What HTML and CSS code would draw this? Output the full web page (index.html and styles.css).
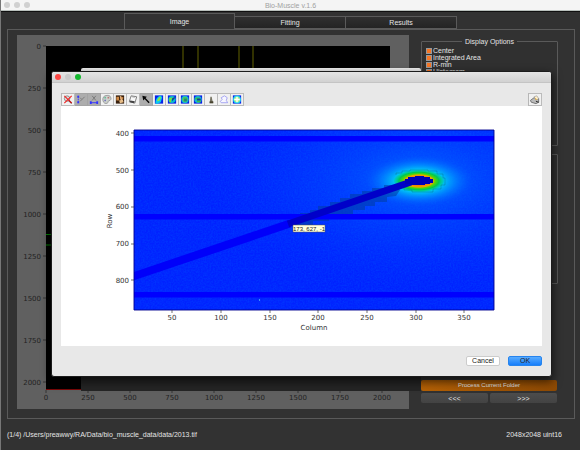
FILE: index.html
```html
<!DOCTYPE html>
<html lang="en">
<head>
<meta charset="utf-8">
<title>Bio-Muscle v.1.6</title>
<link rel="stylesheet" href="styles.css">
</head>
<body>
<div class="window">
  <header class="titlebar">
    <div class="lights"><i></i><i></i><i></i></div>
    <span>Bio-Muscle v.1.6</span>
  </header>
  <nav class="tabs">
    <button class="tab active">Image</button>
    <button class="tab">Fitting</button>
    <button class="tab">Results</button>
  </nav>
  <main class="panel">
    <svg class="figure" viewBox="17 35 392 374" preserveAspectRatio="none">
      <path d="M46 46H390V390H46Z"/>
      <path d="M183 46V390M198 46V390M239 46V390M253 46V390" stroke="#4c4c00" stroke-width="1.300"/>
      <path d="M46 234.500H390M46 245H390" stroke="#008500"/>
      <path d="M46 389.500H390" stroke="#790808"/>
      <path d="M43 46h3M43 88h3M43 130h3M43 172h3M43 214h3M43 256h3M43 298h3M43 340h3M43 382h3M46 390v3M88 390v3M130 390v3M172 390v3M214 390v3M256 390v3M298 390v3M340 390v3M382 390v3" stroke="#222" stroke-width=".7"/>
      <g class="ticks end">
        <text x="41" y="49">0</text><text x="41" y="91">250</text><text x="41" y="133">500</text><text x="41" y="175">750</text><text x="41" y="217">1000</text><text x="41" y="259">1250</text><text x="41" y="301">1500</text><text x="41" y="343">1750</text><text x="41" y="385">2000</text>
      </g>
      <g class="ticks middle">
        <text x="46" y="400">0</text><text x="88" y="400">250</text><text x="130" y="400">500</text><text x="172" y="400">750</text><text x="214" y="400">1000</text><text x="256" y="400">1250</text><text x="298" y="400">1500</text><text x="340" y="400">1750</text><text x="382" y="400">2000</text>
      </g>
    </svg>
    <aside class="side">
      <fieldset class="group options">
        <legend>Display Options</legend>
        <label><input type="checkbox" checked>Center</label>
        <label><input type="checkbox" checked>Integrated Area</label>
        <label><input type="checkbox" checked>R-min</label>
        <label><input type="checkbox" checked>Histogram</label>
      </fieldset>
      <div class="group settings"></div>
      <div class="actions">
        <button class="process">Process Current Folder</button>
        <button>&lt;&lt;&lt;</button>
        <button>&gt;&gt;&gt;</button>
      </div>
    </aside>
  </main>
  <footer class="status">
    <span>(1/4) /Users/preawwy/RA/Data/bio_muscle_data/data/2013.tif</span>
    <span>2048x2048 uint16</span>
  </footer>
</div>

<div class="back-dialog"></div>

<section class="dialog" role="dialog">
  <div class="dialog-bar lights colored"><i></i><i></i><i></i></div>
  <div class="dialog-body">
    <div class="toolbar">
      <div class="tools">
        <button><svg viewBox="0 0 12 12"><circle cx="5" cy="5" r="3" fill="#ddd" stroke="#888"/><path d="M7 7l3 3" stroke="#222" stroke-width="1.500"/><path d="M2 2l8 8M10 2l-8 8" stroke="#f32222" stroke-width="1.200"/></svg></button>
        <button class="on"><svg viewBox="0 0 12 12"><path d="M3 2v8" stroke="#33f" stroke-dasharray="2 1"/><path d="M2 2h2v2H2zM2 8h2v2H2z" fill="#33f"/><path d="M5 4l2 2 3-3M7 6L5 8" fill="none" stroke="#777"/></svg></button>
        <button class="on"><svg viewBox="0 0 12 12"><path d="M2 9.500h8" stroke="#33f"/><path d="M1.500 8h2v3h-2zM8.500 8h2v3h-2z" fill="#33f"/><path d="M4 2l4 5M8 2L4 7" stroke="#777"/></svg></button>
        <button><svg viewBox="0 0 12 12"><path d="M6 1.500C2.500 1.500 1 4 1.500 7s3 4 5 3c1-1 0-2 1.500-2.500 2-.5 3-2 2-4S8 1.500 6 1.500z" fill="#ccd2cc" stroke="#888" stroke-width=".8"/><circle cx="4" cy="4" r="1" fill="#6b9"/><circle cx="7.500" cy="4" r="1" fill="#b77"/><circle cx="4" cy="7" r="1" fill="#77b"/></svg></button>
        <button><svg viewBox="0 0 12 12"><path d="M1.500 1.500h9v9h-9z" fill="#38200f"/><path d="M2 3h3v4H2zM6 2l4 2-2 3-2-1z" fill="#cf8a46"/><path d="M5 7l4-1 1 3-4 1z" fill="#e8bd87"/><path d="M6 2l2 5" stroke="#eee" stroke-width=".5"/></svg></button>
        <button><svg viewBox="0 0 12 12"><path d="M4 2l6 1-2 7-6-2z" fill="#f8f8f8" stroke="#555" stroke-width=".8"/><path d="M3 7l5 1-1 2-5-1z" fill="#444"/><path d="M5 3l3 .5" stroke="#999"/></svg></button>
        <button class="on"><svg viewBox="0 0 12 12"><path d="M2 2l5 1-1.500 1.300L10 9 8.800 10 4.500 5.500 3 7z" fill="#080808"/></svg></button>
        <button><svg viewBox="0 0 12 12"><path d="M1.500 1.500h9v9h-9z" fill="#0820e8"/><path d="M2 10C2 5 5 2 8 1.500l1.500 2L8 9l-4 2z" fill="#09c9ee"/><path d="M4 8c0-3 2-5 4-5 0 3-1 5-4 5z" fill="#8ae64c"/></svg></button>
        <button><svg viewBox="0 0 12 12"><path d="M1.500 1.500h9v9h-9z" fill="#0820e8"/><ellipse cx="6" cy="6" rx="4" ry="3.800" fill="#08bcd1"/><path d="M3 4h5v2H5v3H3z" fill="#79df39"/><path d="M6 5l3-2v2L6 8z" fill="#123b9c"/></svg></button>
        <button><svg viewBox="0 0 12 12"><path d="M1.500 1.500h9v9h-9z" fill="#0820e8"/><circle cx="6" cy="6" r="4" fill="#12b9d0"/><circle cx="6" cy="6" r="2.700" fill="#52ca48"/><path d="M5 5h3v3H5z" fill="#257f80"/></svg></button>
        <button><svg viewBox="0 0 12 12"><path d="M1.500 1.500h9v9h-9z" fill="#0820e8"/><ellipse cx="6" cy="6" rx="4" ry="3.800" fill="#12b9d0"/><path d="M3 4h5v2H3zM5 7h4v2H5z" fill="#40bd48"/><path d="M5 5h4v2H5z" fill="#153d92"/></svg></button>
        <button><svg viewBox="0 0 12 12"><path d="M5.300 3h1.500l.5 3L8.500 10h-4L5 6z" fill="#777564"/><path d="M4.500 8h4v2h-4z" fill="#47432f"/></svg></button>
        <button><svg viewBox="0 0 12 12"><path d="M3 9.500h7L8.500 7l1-3-3-2L3 4l1 2-2 2z" fill="#f6f6ff" stroke="#8c8cf0" stroke-width=".8"/></svg></button>
        <button><svg viewBox="0 0 12 12"><path d="M1.500 1.500h9v9h-9z" fill="#0820e8"/><circle cx="6" cy="6" r="4.300" fill="#22d6ee"/><circle cx="6" cy="6" r="3" fill="#b9f17d"/><path d="M6 3v6M3 6h6" stroke="#fff" stroke-width="1.500"/></svg></button>
      </div>
      <div class="tools">
        <button><svg viewBox="0 0 12 12"><path d="M1 7l4-3 5 1v4l-3 1.500L2 9z" fill="#bbb" stroke="#555" stroke-width=".8"/><path d="M5 3l3-1 2 3-3 2z" fill="#fff1d0" stroke="#888" stroke-width=".6"/><path d="M6 5l2 1" stroke="#e2a41c"/><path d="M7 8l3 1" stroke="#222"/></svg></button>
      </div>
    </div>
    <svg class="plot" viewBox="61 106 481 240">
      <defs>
        <radialGradient id="wide"><stop offset="0" stop-color="#0068ff"/><stop offset=".35" stop-color="#004cff" stop-opacity=".65"/><stop offset="1" stop-color="#0030ff" stop-opacity="0"/></radialGradient>
        <radialGradient id="cyan"><stop offset="0" stop-color="#00ffe0"/><stop offset=".4" stop-color="#00e4ee" stop-opacity=".9"/><stop offset=".65" stop-color="#00a8ff" stop-opacity=".55"/><stop offset="1" stop-color="#0060ff" stop-opacity="0"/></radialGradient>
        <radialGradient id="hot"><stop offset="0" stop-color="#f24400"/><stop offset=".56" stop-color="#f0a000"/><stop offset=".64" stop-color="#58d800"/><stop offset=".8" stop-color="#00c850"/><stop offset="1" stop-color="#00c8a0" stop-opacity=".4"/></radialGradient>
        <filter id="grain" x="0" y="0" width="1" height="1"><feTurbulence type="fractalNoise" baseFrequency=".6" numOctaves="2" seed="4"/><feColorMatrix values="0 0 0 0 0  0 0 0 0 .18  0 0 0 0 1  1 0 0 0 -.3"/></filter>
        <clipPath id="area"><path d="M134 130H494V310H134Z"/></clipPath>
      </defs>
      <g clip-path="url(#area)">
        <path d="M134 130H494V310H134Z" fill="#0022ff"/>
        <ellipse cx="418" cy="180" rx="210" ry="110" fill="url(#wide)"/>
        <path d="M134 130H494V310H134Z" filter="url(#grain)" opacity=".4"/>
        <ellipse cx="419" cy="181" rx="54" ry="25" fill="url(#cyan)"/>
        <ellipse cx="419" cy="181" rx="25" ry="11" fill="url(#hot)"/>
        <path d="M290 220l10-3v-4h10v-3h8v-4h12v-4h10v-4h10v-4h12v-3h10v-3h12v-3h12l4 5-4 6-9 1v5h-12v4h-10v4h-12v4h-12v3h-12v4h-16v4h-20l-13 2z" fill="#003ca0" opacity=".55"/>
        <path d="M396 175v-2h6v-2h8v-1h18v1h9v3h6v4h2v7h-4v4h-8v3h-21v-2h-8v-3" fill="none" stroke="#006b78" stroke-width=".7" opacity=".5"/>
        <path d="M134 136H494v5.500H134ZM134 214H494v5.500H134ZM134 292H494v5.500H134Z" fill="#00f"/>
        <path d="M130 277.500L290 223.500" stroke="#0000fa" stroke-width="8"/>
        <path d="M288 224L411 182" stroke="#0000c9" stroke-width="7"/>
        <path d="M405 181v-2h3v-2h7v-1h9v1h6v2h3v4h-3v1h-5v1h-15v-1h-5z" fill="#0000b8"/>
        <path d="M259 299.500h1v1h-1z" fill="#7ff"/>
      </g>
      <path d="M134 130H494V310H134Z" fill="none" stroke="#000090" stroke-width=".9"/>
      <path d="M131 133h3M131 170h3M131 207h3M131 244h3M131 280h3M172 310v3M221 310v3M270 310v3M318 310v3M367 310v3M416 310v3M464 310v3" stroke="#333" stroke-width=".7"/>
      <g class="ticks end"><text x="129" y="136">400</text><text x="129" y="173">500</text><text x="129" y="209">600</text><text x="129" y="246">700</text><text x="129" y="283">800</text></g>
      <g class="ticks middle"><text x="172" y="320">50</text><text x="221" y="320">100</text><text x="270" y="320">150</text><text x="318" y="320">200</text><text x="367" y="320">250</text><text x="416" y="320">300</text><text x="464" y="320">350</text><text x="314" y="330">Column</text><text transform="translate(112 221) rotate(-90)">Row</text></g>
      <path d="M293 225h32v7h-32z" fill="#ffffdc" stroke="#555" stroke-width=".5"/>
      <text class="readout" x="309" y="231">173, 627, -1</text>
    </svg>
    <div class="confirm"><button>Cancel</button><button class="primary">OK</button></div>
  </div>
</section>
</body>
</html>
```
FILE: styles.css
```css
* { box-sizing: border-box; }
body {
  margin: 0;
  background: #323232;
  color: #e4e4e4;
  font: 7px/9px "Liberation Sans", Arial, sans-serif;
}
button { font: inherit; color: inherit; padding: 0; margin: 0; border: 0; }
.window {
  display: flex;
  flex-direction: column;
  height: 100vh;
  border-left: 1px solid #777;
}
.titlebar {
  position: relative;
  height: 11px;
  flex: none;
  padding-top: 1px;
  background: #f4f4f4;
  border-bottom: 1px solid #b9c0bc;
  color: #a0a0a0;
  text-align: center;
}
.titlebar .lights { position: absolute; left: 3px; top: 2px; }
.lights { display: flex; align-items: center; gap: 4px; }
.lights i { width: 6px; height: 6px; border-radius: 50%; background: #d0d0d0; }
.tabs {
  display: flex;
  justify-content: center;
  align-items: flex-end;
  height: 18px;
  flex: none;
  border-top: 1px solid #101010;
}
.tab {
  width: 111px;
  height: 13px;
  background: linear-gradient(#303030, #242424);
  border: 1px solid #5a5a5a;
  border-left: 0;
}
.tab.active { height: 16px; background: #323232; border-left: 1px solid #5a5a5a; border-bottom: 0; }
.panel {
  flex: 1;
  display: grid;
  grid-template-columns: 392fr 137fr;
  grid-template-rows: 100%;
  gap: 12px;
  min-height: 0;
  margin: 0 5px 0 6px;
  padding: 5px 16px 9px 9px;
  border: 1px solid #5a5a5a;
}
.figure { width: 100%; height: 100%; background: #606060; }
.ticks { font: 7px "DejaVu Sans", sans-serif; fill: #333; }
.figure .ticks { fill: #222; }
.end { text-anchor: end; }
.middle { text-anchor: middle; }
.side { display: flex; flex-direction: column; padding-top: 2px; }
.group { border: 1px solid #5a5a5a; border-radius: 1px; background: #303030; margin: 0; }
.options { height: 109px; padding: 1px 4px; }
.options legend { margin: 0 auto; padding: 0 3px; line-height: 9px; }
.options label { display: flex; align-items: center; gap: 1px; height: 7px; }
.options input {
  appearance: none;
  width: 6px;
  height: 6px;
  margin: 0;
  background: #f57524;
  border: 1px solid #999;
}
.settings { height: 130px; margin-top: 8px; }
.actions {
  display: grid;
  grid-template-columns: 1fr 1fr;
  gap: 2px;
  margin-top: auto;
  padding: 0 1px 6px 0;
}
.actions button {
  height: 10px;
  border-radius: 2px;
  background: linear-gradient(#4c4c4c, #434343);
}
.actions .process { grid-column: span 2; height: 11px; font-size: 6px; background: linear-gradient(90deg, #b56105, #8e4a04); }
.status { height: 31px; flex: none; display: flex; justify-content: space-between; align-items: center; padding: 0 18px 0 6px; }
.back-dialog {
  position: absolute;
  top: 68px;
  left: 81px;
  right: 159px;
  bottom: 59px;
  background: #252525;
  border-top: 4px solid #eee;
  border-radius: 2px 2px 0 0;
}
.dialog {
  position: absolute;
  top: 71px;
  left: 51px;
  right: 28px;
  border: 1px solid #1c1c1c;
  border-radius: 3px;
  background: #e8e8e8;
  box-shadow: 0 4px 10px 1px #0009;
  color: #222;
}
.dialog-bar { height: 11px; padding-left: 3px; background: linear-gradient(#e4e4e4, #d1d1d1); border-bottom: 1px solid #c4c4c4; border-radius: 2px 2px 0 0; }
.colored i:first-child { background: #fc4743; }
.colored i:nth-child(2) { background: #c9c9c9; }
.colored i:last-child { background: #14b82e; }
.dialog-body { padding: 10px 9px; }
.toolbar { display: flex; justify-content: space-between; }
.tools { display: flex; border-left: 1px solid #b6b6b6; }
.tools button {
  width: 13px;
  height: 13px;
  background: #f1f1f1;
  border: 1px solid #bbb;
  border-left: 0;
}
.tools .on { background: #adadad; border-color: #a4a4a4; }
.tools svg { display: block; width: 12px; height: 11px; }
.plot { display: block; width: 100%; background: #fff; }
.readout { font: 6px "Liberation Sans", sans-serif; fill: #222; text-anchor: middle; }
.confirm { display: flex; justify-content: flex-end; gap: 8px; padding-top: 10px; }
.confirm button {
  width: 34px;
  height: 10px;
  line-height: 8px;
  border: 1px solid #ccc;
  border-radius: 2px;
  background: #fff;
}
.confirm .primary { background: linear-gradient(#59acff, #167efb); border-color: #2684ee; }
```
